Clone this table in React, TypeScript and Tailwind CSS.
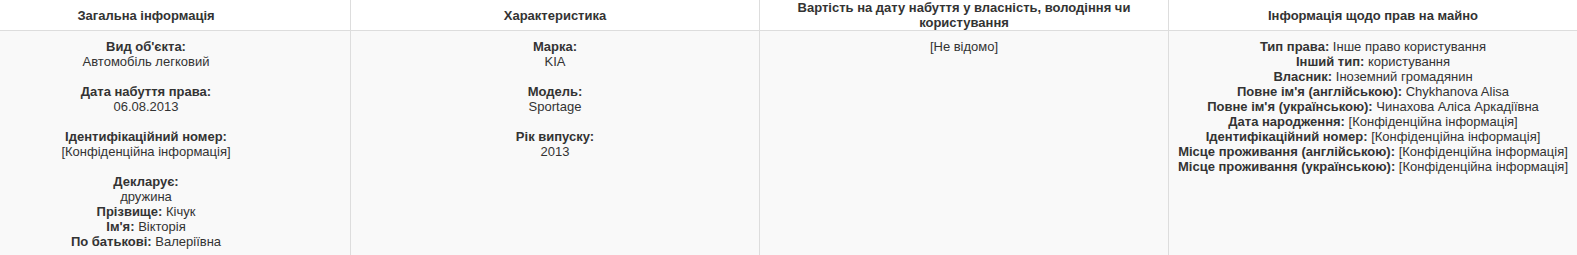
import React from "react";

type Field = { label: string; value: string };

const confidential = "[Конфіденційна інформація]";

const generalBlocks: Field[][] = [
    [{ label: "Вид об'єкта:", value: "Автомобіль легковий" }],
    [{ label: "Дата набуття права:", value: "06.08.2013" }],
    [{ label: "Ідентифікаційний номер:", value: confidential }],
];

const specsBlocks: Field[][] = [
    [{ label: "Марка:", value: "KIA" }],
    [{ label: "Модель:", value: "Sportage" }],
    [{ label: "Рік випуску:", value: "2013" }],
];

const rights: Field[] = [
    { label: "Тип права:", value: "Інше право користування" },
    { label: "Інший тип:", value: "користування" },
    { label: "Власник:", value: "Іноземний громадянин" },
    { label: "Повне ім'я (англійською):", value: "Chykhanova Alisa" },
    { label: "Повне ім'я (українською):", value: "Чинахова Аліса Аркадіївна" },
    { label: "Дата народження:", value: confidential },
    { label: "Ідентифікаційний номер:", value: confidential },
    { label: "Місце проживання (англійською):", value: confidential },
    { label: "Місце проживання (українською):", value: confidential },
];

const headers = [
    "Загальна інформація",
    "Характеристика",
    "Вартість на дату набуття у власність, володіння чи користування",
    "Інформація щодо прав на майно",
];

function StackedBlock({ field }: { field: Field }) {
    return (
        <div className="mb-[15px]">
            <div className="font-bold">{field.label}</div>
            <div>{field.value}</div>
        </div>
    );
}

function InlineLine({ field }: { field: Field }) {
    return (
        <div>
            <span className="font-bold">{field.label}</span> {field.value}
        </div>
    );
}

export default function App() {
    return (
        <div className="w-[1577px] h-[255px] overflow-hidden bg-white">
            <div
                className="-ml-[58px] w-[1636px] text-[13px] leading-[15px] text-[#333] text-center"
                style={{ fontFamily: '"Liberation Sans", Arial, sans-serif' }}
            >
                {/* header row */}
                <div className="grid grid-cols-[409px_409px_409px_409px]">
                    {headers.map((h) => (
                        <div
                            key={h}
                            className="h-[31px] flex items-center justify-center px-2 font-bold border-r border-b border-[#ddd]"
                        >
                            {h}
                        </div>
                    ))}
                </div>

                {/* body row */}
                <div className="grid grid-cols-[409px_409px_409px_409px] bg-[#f9f9f9]">
                    <div className="pt-2 px-2 pb-2 border-r border-[#ddd] min-h-[240px]">
                        {generalBlocks.map((b, i) => (
                            <StackedBlock key={i} field={b[0]} />
                        ))}
                        <div className="font-bold">Декларує:</div>
                        <div>дружина</div>
                        <InlineLine field={{ label: "Прізвище:", value: "Кічук" }} />
                        <InlineLine field={{ label: "Ім'я:", value: "Вікторія" }} />
                        <InlineLine field={{ label: "По батькові:", value: "Валеріївна" }} />
                    </div>
                    <div className="pt-2 px-2 pb-2 border-r border-[#ddd]">
                        {specsBlocks.map((b, i) => (
                            <StackedBlock key={i} field={b[0]} />
                        ))}
                    </div>
                    <div className="pt-2 px-2 pb-2 border-r border-[#ddd]">
                        <div>[Не відомо]</div>
                    </div>
                    <div className="pt-2 px-2 pb-2 border-r border-[#ddd]">
                        {rights.map((f, i) => (
                            <InlineLine key={i} field={f} />
                        ))}
                    </div>
                </div>
            </div>
        </div>
    );
}
